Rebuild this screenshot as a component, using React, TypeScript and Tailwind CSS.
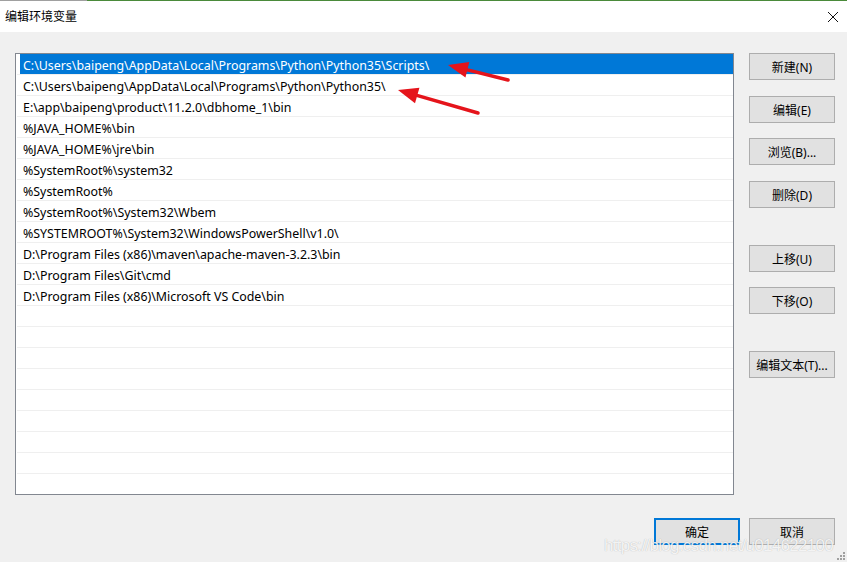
import React from 'react';

const FONT = { fontFamily: '"Microsoft YaHei UI", "Noto Sans", "Noto Sans CJK SC", sans-serif' };

const paths = [
  'C:\\Users\\baipeng\\AppData\\Local\\Programs\\Python\\Python35\\Scripts\\',
  'C:\\Users\\baipeng\\AppData\\Local\\Programs\\Python\\Python35\\',
  'E:\\app\\baipeng\\product\\11.2.0\\dbhome_1\\bin',
  '%JAVA_HOME%\\bin',
  '%JAVA_HOME%\\jre\\bin',
  '%SystemRoot%\\system32',
  '%SystemRoot%',
  '%SystemRoot%\\System32\\Wbem',
  '%SYSTEMROOT%\\System32\\WindowsPowerShell\\v1.0\\',
  'D:\\Program Files (x86)\\maven\\apache-maven-3.2.3\\bin',
  'D:\\Program Files\\Git\\cmd',
  'D:\\Program Files (x86)\\Microsoft VS Code\\bin',
];

const rows = Array.from({ length: 20 }, (_, i) => paths[i] ?? '');

function Btn({ label, className = '' }: { label: string; className?: string }) {
  return (
    <div
      className={`w-[86px] h-[27px] flex items-center justify-center pt-[2px] bg-[#e1e1e1] border border-[#adadad] text-[12px] text-black ${className}`}
    >
      {label}
    </div>
  );
}

function Arrow({ x1, y1, x2, y2 }: { x1: number; y1: number; x2: number; y2: number }) {
  // arrow from tail (x1,y1) to tip (x2,y2)
  const dx = x2 - x1;
  const dy = y2 - y1;
  const len = Math.hypot(dx, dy);
  const ux = dx / len;
  const uy = dy / len;
  const hl = 20;
  const hw = 8;
  const bx = x2 - ux * hl;
  const by = y2 - uy * hl;
  const p1 = `${bx - uy * hw},${by + ux * hw}`;
  const p2 = `${bx + uy * hw},${by - ux * hw}`;
  return (
    <g>
      <line x1={x1} y1={y1} x2={bx + ux * 4} y2={by + uy * 4} stroke="#e5141b" strokeWidth={3.5} strokeLinecap="round" />
      <polygon points={`${x2},${y2} ${p1} ${p2}`} fill="#e5141b" />
    </g>
  );
}

export default function App() {
  return (
    <div className="relative w-[847px] h-[562px] bg-[#f0f0f0] overflow-hidden flex flex-col" style={FONT}>
      {/* title bar */}
      <div className="h-[32px] bg-white flex flex-col shrink-0">
        <div className="h-px flex">
          <div className="w-[87px] bg-[#a0a0a0]" />
          <div className="flex-1 bg-[#4a8a3a]" />
        </div>
        <div className="flex-1 flex items-center justify-between pl-[5px] pr-[7px]">
          <span className="text-[12px] text-black">编辑环境变量</span>
          <svg width="12" height="12" viewBox="0 0 12 12" className="mr-[1px]">
            <path d="M1 1 L11 11 M11 1 L1 11" stroke="#111" strokeWidth="1" />
          </svg>
        </div>
      </div>

      <div className="flex pt-[21px] pl-[15px]">
        {/* list */}
        <div className="w-[719px] h-[442px] border border-[#828790] bg-white">
          {rows.map((r, i) => (
            <div
              key={i}
              className={`h-[21px] border-b border-[#efefef] ml-px ${i === 0 ? 'pl-[3px]' : ''}`}
            >
              <div
                className={`h-[20px] flex items-center pt-[4px] text-[12.4px] whitespace-nowrap ${
                  i === 0 ? 'bg-[#0078d7] text-white pl-[3px]' : 'text-black pl-[6px]'
                }`}
              >
                {r}
              </div>
            </div>
          ))}
        </div>

        {/* side buttons */}
        <div className="flex flex-col ml-[15px]">
          <Btn label="新建(N)" />
          <Btn label="编辑(E)" className="mt-[16px]" />
          <Btn label="浏览(B)..." className="mt-[15px]" />
          <Btn label="删除(D)" className="mt-[16px]" />
          <Btn label="上移(U)" className="mt-[37px]" />
          <Btn label="下移(O)" className="mt-[15px]" />
          <Btn label="编辑文本(T)..." className="mt-[37px]" />
        </div>
      </div>

      {/* bottom buttons */}
      <div className="flex justify-end gap-[9px] pr-[12px] mt-[23px]">
        <div className="w-[86px] h-[27px] flex items-center justify-center pt-[2px] bg-[#e1e1e1] border-2 border-[#0078d7] text-[12px] text-black">
          确定
        </div>
        <Btn label="取消" />
      </div>

      {/* watermark */}
      <div
        className="absolute left-[604px] top-[533px] text-[17px] tracking-[-0.7px] text-white/85 whitespace-nowrap"
        style={{ fontFamily: '"Liberation Sans", Arial, sans-serif', textShadow: '0 0 1px rgba(0,0,0,0.3)' }}
      >
        https://blog.csdn.net/u014622100
      </div>

      {/* resize grip */}
      <svg className="absolute right-[2px] bottom-[2px]" width="8" height="8" viewBox="0 0 8 8">
        <rect x="6" y="0" width="2" height="2" fill="#a0a0a0" />
        <rect x="3" y="3" width="2" height="2" fill="#a0a0a0" />
        <rect x="6" y="3" width="2" height="2" fill="#a0a0a0" />
        <rect x="0" y="6" width="2" height="2" fill="#a0a0a0" />
        <rect x="3" y="6" width="2" height="2" fill="#a0a0a0" />
        <rect x="6" y="6" width="2" height="2" fill="#a0a0a0" />
      </svg>

      {/* annotation arrows */}
      <svg className="absolute left-0 top-0 pointer-events-none" width="847" height="562">
        <Arrow x1={508} y1={80} x2={448} y2={65} />
        <Arrow x1={478} y1={113} x2={398} y2={90} />
      </svg>
    </div>
  );
}
